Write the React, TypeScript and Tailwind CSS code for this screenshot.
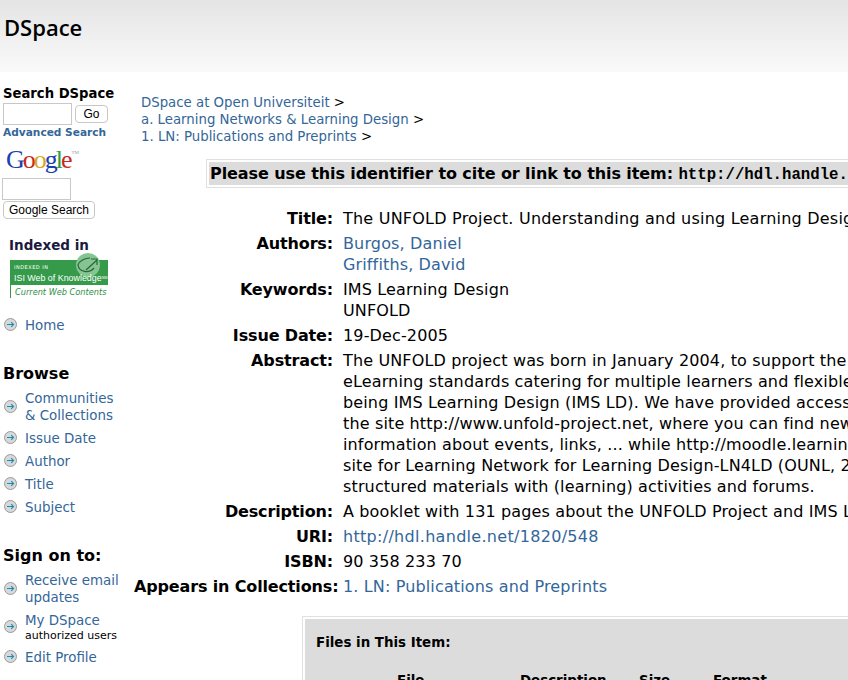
import React from 'react';

const linkCls = 'text-[#336699]';

const Arrow: React.FC = () => (
    <svg width="13" height="13" viewBox="0 0 13 13" className="shrink-0 -mt-[2px]">
        <circle cx="6.5" cy="6.5" r="6" fill="#d8d8d8" stroke="#9a9a9a" strokeWidth="1" />
        <path d="M3 6.5H9.5M7.2 4.2L9.5 6.5L7.2 8.8" fill="none" stroke="#1490b5" strokeWidth="1.1" />
    </svg>
);

const NavItem: React.FC<{ children: React.ReactNode; sub?: string }> = ({ children, sub }) => (
    <div className="flex items-center gap-2">
        <Arrow />
        <div>
            <div className={`${linkCls} text-[13.4px] leading-[17px]`}>{children}</div>
            {sub && <div className="text-[11px] leading-[13px] text-black">{sub}</div>}
        </div>
    </div>
);

const Row: React.FC<{ label: string; children: React.ReactNode }> = ({ label, children }) => (
    <div className="flex">
        <div className="w-[199px] shrink-0 text-right font-bold whitespace-nowrap tracking-[-0.15px]">{label}</div>
        <div className="whitespace-nowrap pl-[10px] tracking-[0.14px]">{children}</div>
    </div>
);

const GoogleLogo: React.FC = () => (
    <div className="ml-[6px] mt-[7px] h-[26px] flex text-[26px] leading-[26px] tracking-[-2px] font-['Liberation_Serif',serif]">
        <span className="text-[#1a3fb0]">G</span>
        <span className="text-[#c8281e]">o</span>
        <span className="text-[#d8a81c]">o</span>
        <span className="text-[#1a3fb0]">g</span>
        <span className="text-[#2e9a3c]">l</span>
        <span className="text-[#c8281e]">e</span>
        <span className="text-[5px] leading-[12px] tracking-normal text-[#999] ml-[1px]">TM</span>
    </div>
);

const App: React.FC = () => {
    return (
        <div className="w-[848px] h-[680px] overflow-hidden bg-white text-black font-['DejaVu_Sans',sans-serif]">
            <div className="h-[72px] bg-gradient-to-b from-[#e4e4e4] to-[#fafafa] pl-1 pt-[13px] text-[22px] leading-[28px] font-semibold font-['Open_Sans',sans-serif]">DSpace</div>

            <div className="flex">
                <div className="w-[134px] shrink-0">
                    <div className="pl-[3px] pt-[13px] text-[13.2px] leading-[17px] font-bold">Search DSpace</div>
                    <div className="flex items-center gap-[3px] pl-[3px] mt-[1px]">
                        <div className="w-[69px] h-[22px] border border-[#c8c8c8]"></div>
                        <div className="w-[33px] h-[18px] border border-[#c8c8c8] rounded-[4px] text-center text-[12px] leading-[16px] font-['Liberation_Sans',sans-serif]">Go</div>
                    </div>
                    <div className={`pl-[3px] text-[10.6px] leading-[15px] font-bold ${linkCls}`}>Advanced Search</div>
                    <GoogleLogo />
                    <div className="ml-[2px] mt-[5px] w-[69px] h-[22px] border border-[#c8c8c8]"></div>
                    <div className="ml-[3px] mt-[1px] w-[92px] h-[18px] border border-[#c8c8c8] rounded-[4px] text-center text-[12px] leading-[16px] font-['Liberation_Sans',sans-serif]">Google Search</div>

                    <div className="pl-[9px] mt-[18px] text-[13.5px] leading-[17px] font-bold text-[#1a1a40]">Indexed in</div>
                    <div className="relative ml-[10px] mt-[6px] w-[98px] h-[38px]">
                        <div className="h-[25px] bg-[#359a4a] pl-1 pt-[4px] text-white">
                            <div className="text-[5px] leading-[7px] tracking-[0.5px]">INDEXED IN</div>
                            <div className="relative z-10 text-[8.9px] leading-[14px] whitespace-nowrap font-['Liberation_Sans',sans-serif]">ISI Web of Knowledge<span className="text-[4px] align-top">SM</span></div>
                        </div>
                        <div className="h-[13px] border-l border-[#359a4a] pl-1 text-[8.2px] leading-[14px] italic text-[#2f8f45] whitespace-nowrap">Current Web Contents</div>
                        <div className="absolute left-[66px] top-[-7px] w-[24px] h-[24px] rounded-full bg-[#86c491] flex items-center justify-center">
                            <svg width="24" height="24" viewBox="0 0 24 24" fill="none" stroke="#24693a" strokeWidth="1.2">
                                <path d="M14 5C9 5 3 8 2 12C3 19 13 21 18 15" />
                                <path d="M10 17L21 7M15 6H21V12" />
                            </svg>
                        </div>
                    </div>

                    <div className="pl-1 mt-[19px]"><NavItem>Home</NavItem></div>

                    <div className="pl-[3px] mt-[31px] text-[16px] leading-[18px] font-bold">Browse</div>
                    <div className="pl-1 mt-[7px] flex flex-col gap-[6px]">
                        <NavItem>Communities<br />&amp; Collections</NavItem>
                        <NavItem>Issue Date</NavItem>
                        <NavItem>Author</NavItem>
                        <NavItem>Title</NavItem>
                        <NavItem>Subject</NavItem>
                    </div>

                    <div className="pl-[3px] mt-[31px] text-[16px] leading-[18px] font-bold">Sign on to:</div>
                    <div className="pl-1 mt-[7px] flex flex-col gap-[6px]">
                        <NavItem>Receive email<br />updates</NavItem>
                        <NavItem sub="authorized users">My DSpace</NavItem>
                        <div className="mt-[1px]"><NavItem>Edit Profile</NavItem></div>
                    </div>
                </div>

                <div className="flex-1 min-w-0 overflow-hidden">
                    <div className="pl-[7px] pt-[22px] text-[13.3px] leading-[17px]">
                        <div><span className={linkCls}>DSpace at Open Universiteit</span> &gt;</div>
                        <div><span className={linkCls}>a. Learning Networks &amp; Learning Design</span> &gt;</div>
                        <div><span className={linkCls}>1. LN: Publications and Preprints</span> &gt;</div>
                    </div>

                    <div className="ml-[72px] mt-[14px] w-[700px] border border-[#e0e0e0] p-[2px]">
                        <div className="bg-[#dcdcdc] h-[23px] pl-[1px] text-[16px] leading-[23px] font-bold whitespace-nowrap tracking-[-0.09px]">
                            Please use this identifier to cite or link to this item: <span className="font-['Liberation_Mono',monospace] text-[15.7px] tracking-normal">http://hdl.handle.net/1820/548</span>
                        </div>
                    </div>

                    <div className="mt-[20px] text-[16px] leading-[21px] flex flex-col gap-[4px]">
                        <Row label="Title:"><span className="tracking-[0.22px]">The UNFOLD Project. Understanding and using Learning Design</span></Row>
                        <Row label="Authors:"><div className={linkCls}>Burgos, Daniel</div><div className={linkCls}>Griffiths, David</div></Row>
                        <Row label="Keywords:"><div>IMS Learning Design</div><div>UNFOLD</div></Row>
                        <Row label="Issue Date:">19-Dec-2005</Row>
                        <Row label="Abstract:">
                            <div>The UNFOLD project was born in January 2004, to support the</div>
                            <div>eLearning standards catering for multiple learners and flexible</div>
                            <div>being IMS Learning Design (IMS LD). We have provided access</div>
                            <div>the site http://www.unfold-project.net, where you can find new</div>
                            <div>information about events, links, ... while http://moodle.learning</div>
                            <div>site for Learning Network for Learning Design-LN4LD (OUNL, 2</div>
                            <div>structured materials with (learning) activities and forums.</div>
                        </Row>
                        <Row label="Description:">A booklet with 131 pages about the UNFOLD Project and IMS L</Row>
                        <Row label="URI:"><span className={`${linkCls} tracking-[0.3px]`}>http://hdl.handle.net/1820/548</span></Row>
                        <Row label="ISBN:">90 358 233 70</Row>
                        <Row label="Appears in Collections:"><span className={linkCls}>1. LN: Publications and Preprints</span></Row>
                    </div>

                    <div className="ml-[168px] mt-[19px] w-[600px] h-[80px] border border-[#e0e0e0] p-[2px]">
                        <div className="h-full bg-[#dcdcdc] pl-[11px] pt-[15px] text-[13.4px] font-bold">
                            <div className="leading-[17px]">Files in This Item:</div>
                            <div className="flex mt-[21px] leading-[17px]">
                                <div className="ml-[81px] w-[123px]">File</div>
                                <div className="w-[119px]">Description</div>
                                <div className="w-[74px]">Size</div>
                                <div>Format</div>
                            </div>
                        </div>
                    </div>
                </div>
            </div>
        </div>
    );
};

export default App;
